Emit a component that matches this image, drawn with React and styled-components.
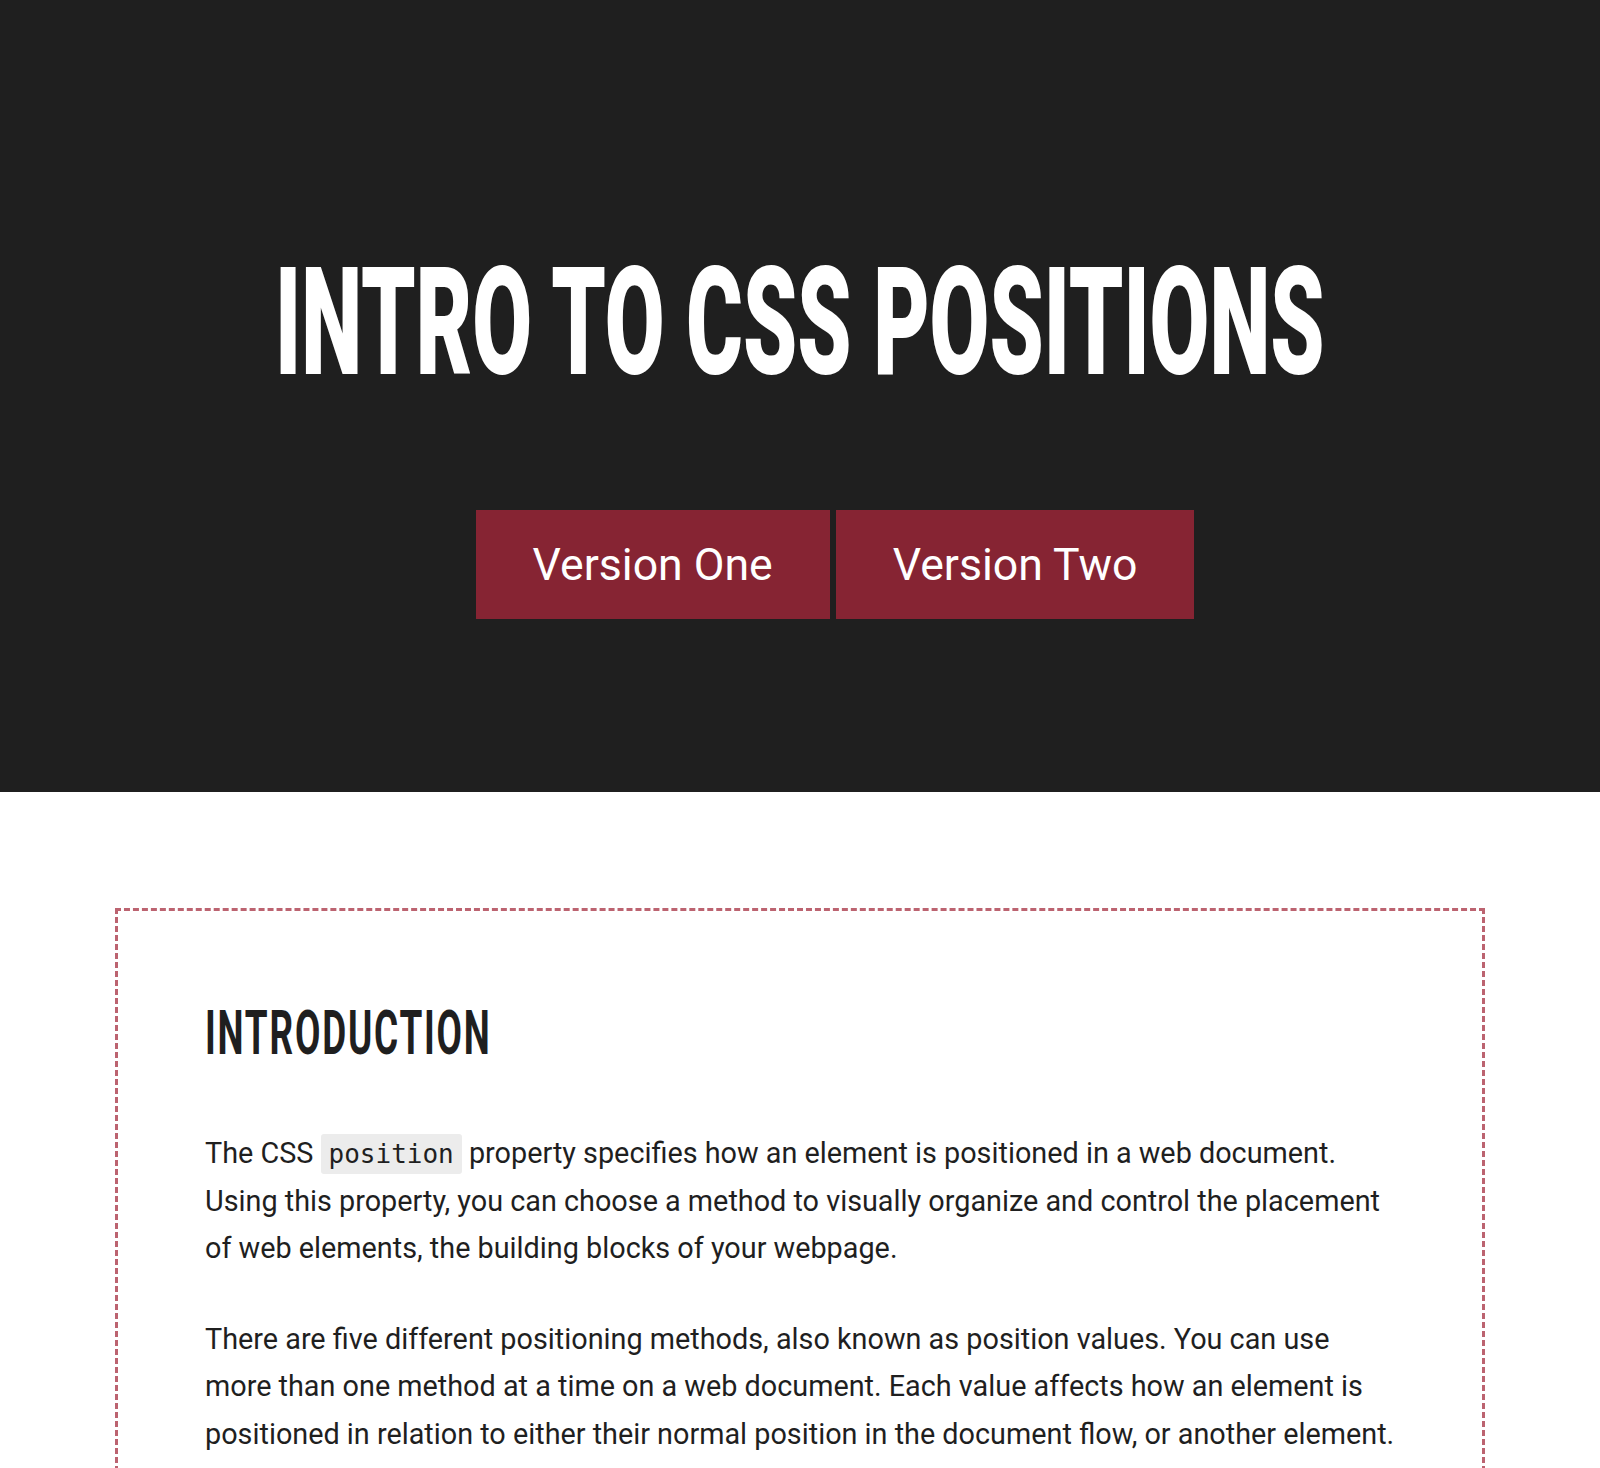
import React from 'react'
import styled, { createGlobalStyle } from 'styled-components'

const GlobalStyle = createGlobalStyle`
  body {
    margin: 0;
    font-family: Roboto, "Liberation Sans", sans-serif;
    background: #fff;
    color: #1f1f1f;
    overflow-x: hidden;
  }
`

const App = () => {
  return (
    <>
      <GlobalStyle />
      <Hero>
        <Title>
          <Squeeze>INTRO TO CSS POSITIONS</Squeeze>
        </Title>
        <ButtonRow>
          <VersionButton href="#one">Version One</VersionButton>
          <VersionButton href="#two">Version Two</VersionButton>
        </ButtonRow>
      </Hero>
      <Main>
        <Card>
          <Heading>
            <HeadingText>INTRODUCTION</HeadingText>
          </Heading>
          <Paragraph>
            The CSS <Code>position</Code> property specifies how an element is positioned in a web document.
            Using this property, you can choose a method to visually organize and control the placement
            of web elements, the building blocks of your webpage.
          </Paragraph>
          <Paragraph>
            There are five different positioning methods, also known as position values. You can use
            more than one method at a time on a web document. Each value affects how an element is
            positioned in relation to either their normal position in the document flow, or another element.
          </Paragraph>
        </Card>
      </Main>
    </>
  )
}

export default App

const Hero = styled.header`
height: 792px;
box-sizing: border-box;
padding-top: 248px;
background-color: #1f1f1f;
display: flex;
flex-direction: column;
align-items: center;
overflow: hidden;
`
const Title = styled.h1`
margin: 0;
font-size: 150px;
line-height: 1;
font-weight: 900;
color: #fff;
text-align: center;
`
const Squeeze = styled.span`
display: inline-block;
transform: scaleX(0.578);
transform-origin: center;
white-space: nowrap;
`
const ButtonRow = styled.nav`
margin-top: 112px;
display: flex;
gap: 6px;
padding-left: 70px;
`
const VersionButton = styled.a`
display: flex;
align-items: center;
justify-content: center;
height: 109px;
padding: 0 57px;
background-color: #862433;
color: #fff;
font-size: 44.6px;
text-decoration: none;
`
const Main = styled.main`
padding: 116px 115px 0;
`
const Card = styled.section`
border: 3px dashed #bc6370;
padding: 91px 87px 40px;
`
const Heading = styled.h2`
margin: 0 0 66px;
font-size: 62px;
line-height: 1;
font-weight: 700;
color: #1f1f1f;
`
const HeadingText = styled.span`
display: inline-block;
transform: scaleX(0.595);
transform-origin: left;
letter-spacing: 3px;
`
const Paragraph = styled.p`
margin: 0 0 43px;
font-size: 28.8px;
line-height: 1.65;
color: #1f1f1f;
`
const Code = styled.code`
font-family: "DejaVu Sans Mono", "Liberation Mono", monospace;
font-size: 26px;
background-color: #ececec;
padding: 5px 8px;
border-radius: 3px;
`
